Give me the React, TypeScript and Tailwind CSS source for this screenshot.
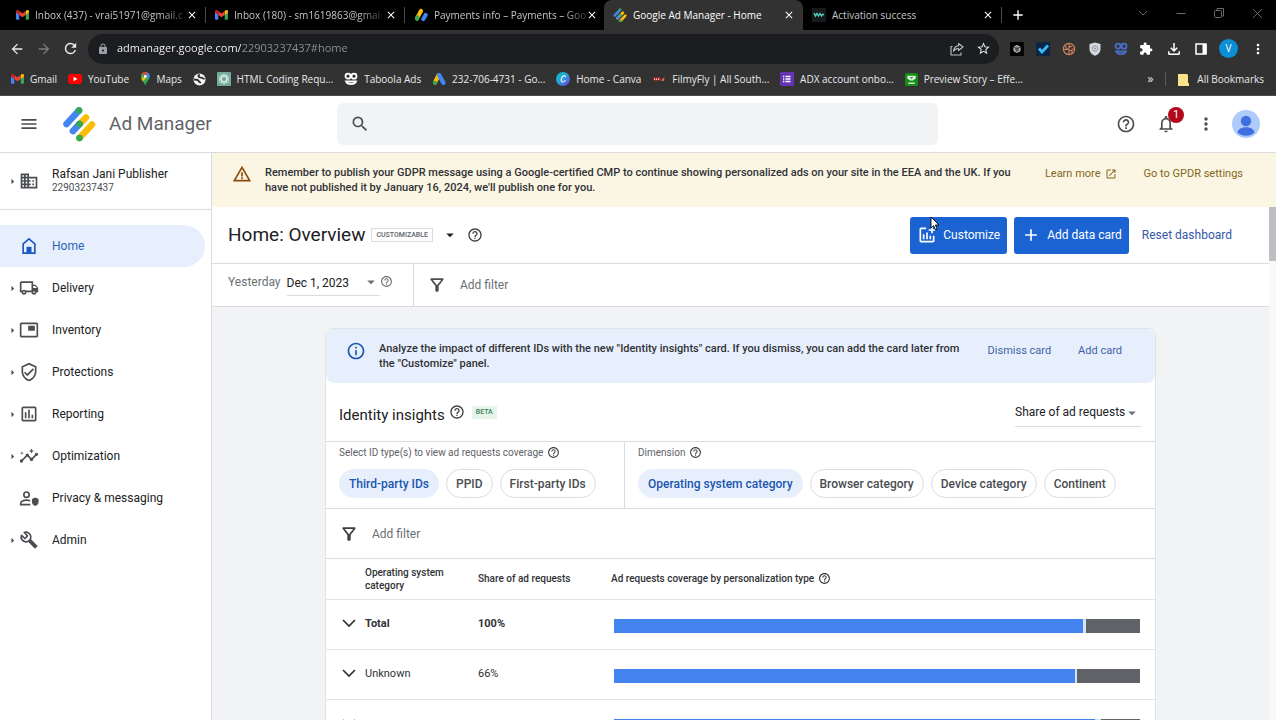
import type { ReactNode } from "react";
import {
  MdAdd,
  MdArrowBack,
  MdArrowDropDown,
  MdArrowForward,
  MdArrowRight,
  MdClose,
  MdDomain,
  MdExtension,
  MdHelpOutline,
  MdInfoOutline,
  MdLock,
  MdMenu,
  MdMoreVert,
  MdNotificationsNone,
  MdOpenInNew,
  MdOutlineAddchart,
  MdOutlineFileDownload,
  MdOutlineFilterAlt,
  MdOutlineInsertChart,
  MdOutlineInsights,
  MdOutlineLocalShipping,
  MdOutlineVerifiedUser,
  MdPictureInPicture,
  MdRefresh,
  MdSearch,
  MdStarBorder,
  MdWarningAmber,
} from "react-icons/md";

function GmailIcon() {
  return (
    <svg viewBox="0 0 24 18" className="w-[13px] shrink-0">
      <path d="M0 3v13a2 2 0 0 0 2 2h4V7z" fill="#4285f4" />
      <path d="M24 3v13a2 2 0 0 1-2 2h-4V7z" fill="#34a853" />
      <path d="M18 2v7l6-4.500V2.500c0-2-2.500-3.200-4.200-2z" fill="#fbbc04" />
      <path d="M6 9V2l6 4.500L18 2v7l-6 4.500z" fill="#ea4335" />
      <path d="M0 2.500v2L6 9V2L4.200.500C2.500-.7 0 .5 0 2.500z" fill="#c5221f" />
    </svg>
  );
}

function AdSenseIcon() {
  return (
    <svg viewBox="0 0 24 24" className="w-[14px] shrink-0" strokeLinecap="round" fill="none">
      <path d="M12 5L5 18" stroke="#fbbc04" strokeWidth="7" />
      <path d="M6 16L5 18" stroke="#34a853" strokeWidth="7" />
      <path d="M20 12l-4 7" stroke="#4285f4" strokeWidth="7" />
    </svg>
  );
}

function AdManagerLogo({ className }: { className: string }) {
  return (
    <svg viewBox="0 0 34 36" className={className} strokeWidth="6.500" strokeLinecap="round" fill="none">
      <path d="M4.500 18L17 4.500" stroke="#4285f4" />
      <path d="M11 25L24 11.500" stroke="#fbbc04" />
      <path d="M11 25L17.500 18" stroke="#4285f4" />
      <path d="M17.500 32L30 18.500" stroke="#fbbc04" />
      <g fill="#34a853" stroke="none">
        <circle cx="17" cy="4.500" r="3.300" />
        <circle cx="17.500" cy="18" r="3.300" />
        <circle cx="17.500" cy="32" r="3.300" />
      </g>
    </svg>
  );
}

function WaveIcon() {
  return (
    <svg viewBox="0 0 14 14" className="w-[14px] shrink-0">
      <rect width="14" height="14" fill="#17191a" />
      <path d="M2 5l1.500 3L5 5.500 6.500 8 8 5.500 9.500 8l1-1.500H12" stroke="#4fd1c5" strokeWidth="1.400" fill="none" />
    </svg>
  );
}

function YouTubeIcon() {
  return (
    <svg viewBox="0 0 14 12" className="w-[14px] shrink-0">
      <rect y="1" width="14" height="10" rx="3" fill="#f00" />
      <path d="M5.500 3.800v4.400L9.500 6z" fill="#fff" />
    </svg>
  );
}

function MapsIcon() {
  return (
    <svg viewBox="0 0 12 16" className="h-[14px] shrink-0">
      <path d="M6 0a5 5 0 0 0-5 5c0 4 4 6 5 11 1-5 5-7 5-11a5 5 0 0 0-5-5z" fill="#34a853" />
      <path d="M6 0a5 5 0 0 0-4 2l4 3 2.500-4.300A5 5 0 0 0 6 0z" fill="#ea4335" />
      <path d="M8.500.700L6 5l4.500 2.200C11.500 5 11 2 8.500.700z" fill="#4285f4" />
      <path d="M1.500 7.500L6 5l1 2-4 3.500z" fill="#fbbc04" />
      <circle cx="6" cy="5" r="1.700" fill="#fff" />
    </svg>
  );
}

function GlobeIcon() {
  return (
    <svg viewBox="0 0 14 14" className="w-[13px] shrink-0">
      <circle cx="7" cy="7" r="6.500" fill="#f1f3f4" />
      <path d="M7.500 2c-2.500 0-2 2.500 0 2.700 2 .1 2.500.8 5 1.800M1 7c3 0 4.500 0 5 1.500s2 1 2 2.500" stroke="#303134" strokeWidth="1.900" fill="none" />
    </svg>
  );
}

function GptIcon() {
  return (
    <svg viewBox="0 0 14 14" className="w-[14px] shrink-0">
      <rect width="14" height="14" rx="1" fill="#74aa9c" />
      <g fill="none" stroke="#e8f3f0" strokeWidth=".8">
        <ellipse cx="7" cy="7" rx="2.500" ry="4.800" />
        <ellipse cx="7" cy="7" rx="2.500" ry="4.800" transform="rotate(60 7 7)" />
        <ellipse cx="7" cy="7" rx="2.500" ry="4.800" transform="rotate(120 7 7)" />
      </g>
    </svg>
  );
}

function TaboolaIcon({ color }: { color: string }) {
  return (
    <svg viewBox="0 0 14 14" className="w-[14px] shrink-0" stroke={color} strokeWidth="1.800" fill="none">
      <circle cx="4" cy="4.200" r="2.500" />
      <circle cx="10" cy="4.200" r="2.500" />
      <path d="M2 9.500c1.500 3.600 8.500 3.600 10 0z" />
    </svg>
  );
}

function GoogleAdsIcon() {
  return (
    <svg viewBox="0 0 24 24" className="w-[14px] shrink-0" strokeLinecap="round">
      <path d="M11 6L5 18" stroke="#fbbc04" strokeWidth="7" />
      <path d="M12.500 5.500L19.500 18.500" stroke="#4285f4" strokeWidth="7.500" />
      <circle cx="5" cy="18.500" r="3.600" fill="#34a853" />
    </svg>
  );
}

function CanvaIcon() {
  return (
    <svg viewBox="0 0 14 14" className="w-[14px] shrink-0">
      <defs>
        <linearGradient id="canva" x1="0" y1="0" x2="1" y2="1">
          <stop offset="0" stopColor="#00c4cc" />
          <stop offset=".5" stopColor="#2a9fd8" />
          <stop offset="1" stopColor="#7d2ae8" />
        </linearGradient>
      </defs>
      <circle cx="7" cy="7" r="7" fill="url(#canva)" />
      <path d="M9.300 5.200c.3-2-2-2-3.200-.2-1.500 2.300-1 5 .7 5 1.200 0 2-.8 2.700-1.800" stroke="#fff" strokeWidth="1.100" fill="none" />
    </svg>
  );
}

function FilmyIcon() {
  return (
    <svg viewBox="0 0 14 14" className="w-[14px] shrink-0">
      <path d="M1 5.500h8v3H2z" fill="#c62828" />
      <path d="M2.500 6.500v1.500M4.500 6.500v1.500M6.500 6.500v1.500" stroke="#f5d6d6" strokeWidth="1" />
      <path d="M9 8.500l3.500-3.500-.5 4z" fill="#e07b39" />
    </svg>
  );
}

function FormsIcon() {
  return (
    <svg viewBox="0 0 14 14" className="w-[14px] shrink-0">
      <rect width="14" height="14" rx="1" fill="#6434b5" />
      <path d="M5.500 4.500h5M5.500 7h5M5.500 9.500h5M3 4.500h1.300M3 7h1.300M3 9.500h1.300" stroke="#fff" strokeWidth="1.300" />
    </svg>
  );
}

function StoryIcon() {
  return (
    <svg viewBox="0 0 14 14" className="w-[13px] shrink-0">
      <rect width="14" height="14" rx="2" fill="#188c18" />
      <path d="M2.500 3h9v3L8.500 8h-3l-3-2z" fill="#d9f2d9" />
      <path d="M5 4.500l2 2 2-2z" fill="#188c18" />
      <path d="M3.500 11h7" stroke="#d9f2d9" strokeWidth="1.500" />
    </svg>
  );
}

function ShareIcon() {
  return (
    <svg viewBox="0 0 14 14" className="w-[14px]" fill="none" stroke="currentColor" strokeWidth="1.100" strokeLinejoin="round">
      <path d="M2.500 4.500H1V13h10v-2.500" />
      <path d="M8.500 1.500L13 5 8.500 8.500v-2c-2.500 0-4 1-5 2.800.3-3 2-5.300 5-5.600z" />
    </svg>
  );
}

function HomeIcon() {
  return (
    <svg viewBox="0 0 24 24" className="size-5 text-[#1a56c4]">
      <path d="M5 20.500V9.500l7-6 7 6v11z" fill="none" stroke="currentColor" strokeWidth="2" />
      <path d="M9 13h6v7H9z" fill="currentColor" />
    </svg>
  );
}

function PrivacyIcon() {
  return (
    <svg viewBox="0 0 24 24" className="size-5">
      <g fill="none" stroke="currentColor" strokeWidth="2">
        <circle cx="9" cy="8" r="3.200" />
        <path d="M13.500 20H2v-1.500c0-2.500 3.500-4 7-4 1.500 0 3 .3 4.300.8" />
      </g>
      <path d="M19.500 11.500l4 1.700v3.300c0 2.500-1.700 4.300-4 5-2.300-.7-4-2.500-4-5v-3.300z" fill="currentColor" />
    </svg>
  );
}

function WrenchIcon() {
  return (
    <svg viewBox="0 0 24 24" className="size-5" fill="none" stroke="currentColor">
      <path d="M6.300 3A5.800 5.800 0 1 1 3 6.300l4 3.900 3.200-3.200z" strokeWidth="2" strokeLinejoin="round" />
      <path d="M12.500 12.500l8.300 8.300" strokeWidth="4.600" />
    </svg>
  );
}

// long titles fade out at the tab's edge
const tabs = [
  { title: "Inbox (437) - vrai51971@gmail.c", icon: <GmailIcon />, fade: true, divider: true },
  { title: "Inbox (180) - sm1619863@gmai", icon: <GmailIcon />, fade: true, divider: true },
  { title: "Payments info – Payments – Goo", icon: <AdSenseIcon />, fade: true },
  { title: "Google Ad Manager - Home", icon: <AdManagerLogo className="w-[14px] shrink-0" />, active: true },
  { title: "Activation success", icon: <WaveIcon />, divider: true },
];

const bookmarks = [
  { label: "Gmail", icon: <GmailIcon /> },
  { label: "YouTube", icon: <YouTubeIcon /> },
  { label: "Maps", icon: <MapsIcon /> },
  { label: "", icon: <GlobeIcon /> },
  { label: "HTML Coding Requ...", icon: <GptIcon /> },
  { label: "Taboola Ads", icon: <TaboolaIcon color="#fff" /> },
  { label: "232-706-4731 - Go...", icon: <GoogleAdsIcon /> },
  { label: "Home - Canva", icon: <CanvaIcon /> },
  { label: "FilmyFly | All South...", icon: <FilmyIcon /> },
  { label: "ADX account onbo...", icon: <FormsIcon /> },
  { label: "Preview Story – Effe...", icon: <StoryIcon /> },
];

const navItems = [
  { label: "Home", icon: <HomeIcon />, active: true },
  { label: "Delivery", icon: <MdOutlineLocalShipping className="size-5" />, expandable: true },
  { label: "Inventory", icon: <MdPictureInPicture className="size-5" />, expandable: true },
  { label: "Protections", icon: <MdOutlineVerifiedUser className="size-5" />, expandable: true },
  { label: "Reporting", icon: <MdOutlineInsertChart className="size-5" />, expandable: true },
  { label: "Optimization", icon: <MdOutlineInsights className="size-5" />, expandable: true },
  { label: "Privacy & messaging", icon: <PrivacyIcon /> },
  { label: "Admin", icon: <WrenchIcon />, expandable: true },
];

const rows = [
  { name: "Total", share: "100%", blue: 89.2, gap: 0.5, bold: true },
  { name: "Unknown", share: "66%", blue: 87.7, gap: 0.3 },
  { name: "", share: "", blue: 91.4, gap: 1.2 },
];

function TabStrip() {
  return (
    <div className="flex h-[30px] items-stretch bg-black pl-[7px] text-[#c4c7c5]">
      {tabs.map((tab) => (
        <div
          key={tab.title}
          className={
            tab.active
              ? "flex max-w-[199px] flex-1 items-center rounded-t-lg bg-[#323232] pr-2 pl-[9px] text-white"
              : "flex max-w-[199px] flex-1 items-center pl-[9px]"
          }
        >
          {tab.icon}
          <span
            className={
              tab.fade
                ? "mr-auto ml-[6px] shrink-0 whitespace-nowrap [mask-image:linear-gradient(90deg,#000_85%,#0004)]"
                : "mr-auto ml-[6px] shrink-0 whitespace-nowrap"
            }
          >
            {tab.title}
          </span>
          <button aria-label="Close tab" className="shrink-0 text-white">
            <MdClose className="size-3" />
          </button>
          {!tab.active && <span className={tab.divider ? "ml-[7px] h-4 w-px bg-[#4a4a4a]" : "ml-[7px] w-px"} />}
        </div>
      ))}
      <button aria-label="New tab" className="ml-2 text-white">
        <MdAdd className="size-4" />
      </button>
      <div className="ml-auto flex items-center gap-[26px] pr-[13px] pb-1 text-[#6b6b6b]">
        <svg viewBox="0 0 12 12" className="size-3" fill="none" stroke="currentColor">
          <path d="M2 4l4 4 4-4" />
        </svg>
        <svg viewBox="0 0 12 12" className="size-3" stroke="currentColor">
          <path d="M1.500 6.500h9" />
        </svg>
        <svg viewBox="0 0 12 12" className="size-3" fill="none" stroke="currentColor">
          <path d="M4 3V1.500h6.500V9H9" />
          <rect x="1.500" y="3.500" width="7" height="7" rx="1" />
        </svg>
        <svg viewBox="0 0 12 12" className="size-3" stroke="currentColor">
          <path d="M2 2l9 9M11 2l-9 9" />
        </svg>
      </div>
    </div>
  );
}

function Toolbar() {
  return (
    <div className="flex h-[37px] items-center pr-3 pl-[9px] text-[#e8eaed]">
      <button aria-label="Back">
        <MdArrowBack className="size-4" />
      </button>
      <button aria-label="Forward" className="ml-[11px] text-[#7d7d7d]">
        <MdArrowForward className="size-4" />
      </button>
      <button aria-label="Reload" className="ml-[10px]">
        <MdRefresh className="size-[17px]" />
      </button>
      <div className="ml-[9px] flex h-[30px] flex-1 items-center rounded-full bg-[#1c1d20] pr-2 pl-[9px]">
        <MdLock className="size-3 text-[#9aa0a6]" />
        <input
          aria-label="Address"
          defaultValue="admanager.google.com/22903237437#home"
          className="ml-2 min-w-0 flex-1 bg-[linear-gradient(90deg,#ffffff_125px,#8f9397_125px)] bg-clip-text text-[11px] text-transparent outline-none"
        />
        <button aria-label="Share" className="text-[#bdc1c6]">
          <ShareIcon />
        </button>
        <button aria-label="Bookmark" className="ml-3">
          <MdStarBorder className="size-[15px]" />
        </button>
      </div>
      <div className="ml-[11px] flex w-[254px] items-center justify-between">
        <svg viewBox="0 0 14 14" className="size-[14px]">
          <rect width="14" height="14" fill="#000" />
          <path d="M7 3.500l3 1.700v3.600l-3 1.700-3-1.700V5.200z" fill="#777" stroke="#ddd" strokeWidth="1" />
          <path d="M4 5.200L7 7l3-1.800M7 7v3.500" stroke="#222" strokeWidth=".7" fill="none" />
        </svg>
        <svg viewBox="0 0 14 14" className="size-[14px]">
          <rect width="14" height="14" rx="1" fill="#0b2545" />
          <path d="M3 6.500l3 3.500 6-6.500" stroke="#38bdf8" strokeWidth="2.800" fill="none" />
        </svg>
        <svg viewBox="0 0 14 14" className="size-[14px]" fill="none" stroke="#d0835f">
          <circle cx="7" cy="7" r="5.600" strokeWidth="1.200" />
          <path d="M7 1.500v4l3-1.500M4 3.500V7h3v5M1.500 7.500H7M7 8.500h3v3M9.500 7h3" strokeWidth="1.100" />
        </svg>
        <svg viewBox="0 0 14 14" className="size-[14px]">
          <path d="M7 .5l5.500 1.500v5c0 3.500-2.500 5.500-5.500 6.700C4 12.500 1.500 10.500 1.500 7V2z" fill="#d5d8dd" />
          <circle cx="7" cy="6.500" r="2.700" fill="none" stroke="#9499a3" />
          <circle cx="7" cy="6.500" r="1" fill="#9499a3" />
        </svg>
        <TaboolaIcon color="#4a6cc9" />
        <MdExtension className="size-[14px] text-white" />
        <MdOutlineFileDownload className="size-[18px] text-white" />
        <svg viewBox="0 0 12 12" className="size-3">
          <rect x="1" y="1" width="10" height="10" fill="none" stroke="#fff" strokeWidth="1.500" />
          <path d="M7.500 1h4v10h-4z" fill="#fff" />
        </svg>
        <span className="flex size-[19px] items-center justify-center rounded-full bg-[#0b8fd6] text-[10px] text-white">V</span>
        <MdMoreVert className="-mr-[2px] size-4 text-white" />
      </div>
    </div>
  );
}

function BookmarksBar() {
  return (
    <div className="flex h-[29px] items-center border-b border-[#4a4a4a] pr-3 pb-1 pl-[11px] text-[#e8eaed]">
      <div className="flex w-full max-w-[1012px] items-center justify-between">
        {bookmarks.map((b) => (
          <a key={b.label} href="#" aria-label={b.label || "Bookmark"} className="flex items-center gap-[6px] whitespace-nowrap">
            {b.icon}
            {b.label}
          </a>
        ))}
      </div>
      <button aria-label="More bookmarks" className="ml-auto text-xs leading-none">»</button>
      <span className="mx-[12px] h-[14px] w-px bg-[#5c5c5c]" />
      <a href="#" className="flex shrink-0 items-center gap-2 whitespace-nowrap">
        <svg viewBox="0 0 11 13" className="w-[11px]">
          <path d="M0 1h9l1 1v8h1v3H0z" fill="#fbe28b" />
        </svg>
        All Bookmarks
      </a>
    </div>
  );
}

function AppHeader() {
  return (
    <header className="flex h-[57px] items-center border-b border-[#dadce0] text-[#4a4d51]">
      <div className="flex w-[337px] shrink-0 items-center pl-[19px]">
        <button aria-label="Main menu">
          <MdMenu className="size-5" />
        </button>
        <AdManagerLogo className="ml-[23px] w-[34px]" />
        <span className="ml-[13px] text-[19px] text-[#5f6368]">Ad Manager</span>
      </div>
      <label className="flex h-[42px] max-w-[601px] flex-1 items-center rounded-md bg-[#f1f3f4] px-[13px]">
        <MdSearch className="size-5" />
        <input aria-label="Search" className="ml-3 min-w-0 flex-1 outline-none" />
      </label>
      <div className="ml-auto flex items-center gap-4 pr-4">
        <div className="flex items-center gap-5">
          <button aria-label="Help">
            <MdHelpOutline className="size-5" />
          </button>
          <button aria-label="Notifications" className="relative">
            <MdNotificationsNone className="size-5" />
            <span className="absolute -top-[7px] left-3 flex size-4 items-center justify-center rounded-full bg-[#b3081b] text-[11px] text-white">
              1
            </span>
          </button>
          <button aria-label="More options">
            <MdMoreVert className="size-5" />
          </button>
        </div>
        <button aria-label="Account">
          <svg viewBox="0 0 28 28" className="size-7">
            <circle cx="14" cy="14" r="14" fill="#aecbfa" />
            <circle cx="14" cy="11" r="5.200" fill="#3f6fe0" />
            <path d="M5.500 22.500c1-7 16-7 17 0a12.500 12.500 0 0 1-17 0z" fill="#3f6fe0" />
          </svg>
        </button>
      </div>
    </header>
  );
}

function Sidebar() {
  return (
    <aside className="w-[212px] shrink-0 border-r border-[#dadce0] text-[#4a4d51]">
      <div className="flex h-[57px] items-center border-b border-[#dadce0] pl-[6px]">
        <MdArrowRight className="size-[13px]" />
        <MdDomain className="size-5" />
        <div className="ml-[13px]">
          <div className="text-[12px] leading-[14px] text-[#202124]">Rafsan Jani Publisher</div>
          <div className="text-[10px] leading-[14px]">22903237437</div>
        </div>
      </div>
      <nav className="mt-[15px]">
        {navItems.map((item) => (
          <a
            key={item.label}
            href="#"
            className={
              item.active
                ? "mr-[6px] flex h-[42px] items-center rounded-r-full bg-[#e8effc] pl-[6px] text-[#2b62b8]"
                : "mr-[6px] flex h-[42px] items-center pl-[6px]"
            }
          >
            <span className="w-[13px]">{item.expandable && <MdArrowRight className="size-[13px]" />}</span>
            {item.icon}
            <span className={item.active ? "ml-[13px] text-[12px]" : "ml-[13px] text-[12px] text-[#202124]"}>{item.label}</span>
          </a>
        ))}
      </nav>
    </aside>
  );
}

function Chip({ children, selected }: { children: ReactNode; selected?: boolean }) {
  return (
    <button
      aria-pressed={!!selected}
      className={
        selected
          ? "h-[29px] rounded-full border border-[#e8effc] bg-[#e8effc] px-[9px] font-medium whitespace-nowrap text-[#1a56b0]"
          : "h-[29px] rounded-full border border-[#dadce0] px-[9px] font-medium whitespace-nowrap text-[#4a4d51]"
      }
    >
      {children}
    </button>
  );
}

function IdentityCard() {
  return (
    <section className="mx-auto w-full max-w-[831px] rounded-t-lg border border-[#dfe3ea] bg-white">
      <div className="flex min-h-[54px] items-start rounded-lg bg-[#e8effc] pt-[12px] pl-[20px]">
        <MdInfoOutline className="size-5 shrink-0 text-[#1a56b0]" />
        <p className="ml-[13px] max-w-[590px] text-[11px] leading-[15px] font-medium text-[#303236]">
          Analyze the impact of different IDs with the new "Identity insights" card. If you dismiss, you can add the card later from the
          "Customize" panel.
        </p>
        <div className="ml-auto flex gap-[27px] pt-[2px] pr-[33px] text-[11px] leading-4 whitespace-nowrap text-[#3c63a8]">
          <button>Dismiss card</button>
          <button>Add card</button>
        </div>
      </div>

      <div className="flex h-[59px] items-center border-b border-[#dadce0] pr-[14px] pl-[13px]">
        <h2 className="pt-[6px] text-[15px] text-[#202124]">Identity insights</h2>
        <MdHelpOutline className="ml-1 size-4" />
        <span className="ml-[7px] bg-[#e6f4ea] px-1 text-[7px] leading-[13px] font-medium text-[#3b8256]">BETA</span>
        <div className="relative ml-auto w-[126px] border-b border-[#dadce0]">
          <select aria-label="Metric" className="h-7 w-full appearance-none text-[12px] text-[#202124] outline-none">
            <option>Share of ad requests</option>
          </select>
          <MdArrowDropDown className="pointer-events-none absolute top-[6px] right-0 size-[18px] text-[#6b6f74]" />
        </div>
      </div>

      <div className="flex border-b border-[#dadce0] text-[12px]">
        <div className="w-[299px] border-r border-[#dadce0] pb-[10px] pl-[13px]">
          <div className="flex h-[21px] items-center gap-1 text-[10px] text-[#5f6368]">
            Select ID type(s) to view ad requests coverage
            <MdHelpOutline className="size-[13px] text-[#3c4043]" />
          </div>
          <div className="mt-[6px] flex gap-[7px]">
            <Chip selected>Third-party IDs</Chip>
            <Chip>PPID</Chip>
            <Chip>First-party IDs</Chip>
          </div>
        </div>
        <div className="flex-1 pl-[13px]">
          <div className="flex h-[21px] items-center gap-1 text-[10px] text-[#5f6368]">
            Dimension
            <MdHelpOutline className="size-[13px] text-[#3c4043]" />
          </div>
          <div className="mt-[6px] flex gap-[7px]">
            <Chip selected>Operating system category</Chip>
            <Chip>Browser category</Chip>
            <Chip>Device category</Chip>
            <Chip>Continent</Chip>
          </div>
        </div>
      </div>

      <div className="flex h-[50px] items-center border-b border-[#dadce0] pl-[13px]">
        <MdOutlineFilterAlt className="size-5" />
        <button className="ml-[13px] text-[12px] text-[#6b6f74]">Add filter</button>
      </div>

      <table className="w-full table-fixed text-left text-[11px] text-[#303236]">
        <colgroup>
          <col className="w-[39px]" />
          <col className="w-[113px]" />
          <col className="w-[133px]" />
          <col />
        </colgroup>
        <thead>
          <tr className="h-[40px] border-b border-[#e3e5e8]">
            <th aria-label="Expand" />
            <th className="pr-4 text-[10px] leading-[13px] font-medium">Operating system category</th>
            <th className="text-[10px] font-medium">Share of ad requests</th>
            <th className="text-[10px] font-medium">
              <span className="flex items-center gap-1">
                Ad requests coverage by personalization type
                <MdHelpOutline className="size-[13px]" />
              </span>
            </th>
          </tr>
        </thead>
        <tbody>
          {rows.map((row) => (
            <tr key={row.name} className={row.bold ? "h-[50px] border-b border-[#e3e5e8] font-bold" : "h-[50px] border-b border-[#e3e5e8]"}>
              <td className="pl-4">
                <button aria-label="Expand row" className="block">
                  <svg viewBox="0 0 14 14" className="size-[14px]" fill="none" stroke="currentColor" strokeWidth="1.700">
                    <path d="M1 3l6 6 6-6" />
                  </svg>
                </button>
              </td>
              <td>{row.name}</td>
              <td>{row.share}</td>
              <td className="pt-[3px] pr-[15px] pl-[3px]">
                <div className="flex h-[14px] bg-[#5f6368]">
                  <div className="bg-[#4383ee]" style={{ width: `${row.blue}%` }} />
                  <div className="bg-[#d2e3fc]" style={{ width: `${row.gap}%` }} />
                </div>
              </td>
            </tr>
          ))}
        </tbody>
      </table>
    </section>
  );
}

export default function App() {
  return (
    <div className="relative flex h-screen flex-col overflow-hidden bg-white font-['Roboto',sans-serif] text-[#3c4043]">
      <div className="shrink-0 bg-[#323232] font-['Open_Sans',sans-serif] text-[10px]">
        <TabStrip />
        <Toolbar />
        <BookmarksBar />
      </div>
      <AppHeader />
      <div className="flex min-h-0 flex-1">
        <Sidebar />
        <main className="flex min-w-0 flex-1 flex-col">
          <div className="flex h-[54px] shrink-0 items-start bg-[#fbf6e3] pt-[11px] pr-[33px] pl-5">
            <MdWarningAmber className="size-5 shrink-0 text-[#8a4b0c]" />
            <p className="ml-[13px] max-w-[760px] pt-px text-[11px] leading-[15px] font-medium text-[#303236]">
              Remember to publish your GDPR message using a Google-certified CMP to continue showing personalized ads on your site in the
              EEA and the UK. If you have not published it by January 16, 2024, we'll publish one for you.
            </p>
            <div className="ml-auto flex gap-[27px] pt-[2px] text-[11px] leading-4 whitespace-nowrap text-[#826620]">
              <a href="#" className="flex items-center gap-1">
                Learn more
                <MdOpenInNew className="size-3" />
              </a>
              <a href="#">Go to GPDR settings</a>
            </div>
          </div>

          <div className="flex min-h-0 flex-1">
            <div className="flex min-w-0 flex-1 flex-col">
              <div className="flex h-[57px] shrink-0 items-center border-b border-[#dadce0] pr-[37px] pl-4">
                <h1 className="text-[19px] text-[#202124]">Home: Overview</h1>
                <span className="ml-[6px] border border-[#dadce0] px-1 text-[7px] leading-3 font-medium text-[#5f6368]">CUSTOMIZABLE</span>
                <button aria-label="Switch view" className="ml-2 text-[#202124]">
                  <MdArrowDropDown className="size-[18px]" />
                </button>
                <MdHelpOutline className="ml-2 size-4" />
                <div className="ml-auto flex items-center text-[12px] whitespace-nowrap text-white">
                  <button className="flex h-[37px] items-center gap-[6px] rounded-[3px] bg-[#1b63d2] px-[7px]">
                    <MdOutlineAddchart className="size-5" />
                    Customize
                  </button>
                  <button className="ml-[7px] flex h-[37px] items-center gap-[6px] rounded-[3px] bg-[#1b63d2] px-[7px]">
                    <MdAdd className="size-5" />
                    Add data card
                  </button>
                  <button className="ml-[13px] text-[#3558a8]">Reset dashboard</button>
                </div>
              </div>

              <div className="flex h-[43px] shrink-0 border-b border-[#dadce0] text-[12px] text-[#6b6f74]">
                <div className="flex w-[202px] items-start border-r border-[#dadce0] pt-[6px] pl-4">
                  <label htmlFor="range" className="leading-6">Yesterday</label>
                  <div className="relative ml-[6px] w-[93px] border-b border-[#dadce0]">
                    <select id="range" className="h-[25px] w-full appearance-none text-[12px] text-[#202124] outline-none">
                      <option>Dec 1, 2023</option>
                    </select>
                    <MdArrowDropDown className="pointer-events-none absolute top-[3px] right-0 size-[18px]" />
                  </div>
                  <MdHelpOutline className="mt-[5px] size-[13px]" />
                </div>
                <MdOutlineFilterAlt className="mt-[11px] ml-[13px] size-5 text-[#4a4d51]" />
                <button className="ml-[13px]">Add filter</button>
              </div>

              <div className="min-h-0 flex-1 overflow-hidden bg-[#f1f3f4] px-6 pt-[21px]">
                <IdentityCard />
              </div>
            </div>
            <div className="w-[7px] bg-[#f8f9fa]">
              <div className="h-[54px] bg-[#bcbec1]" />
            </div>
          </div>
        </main>
      </div>

      {/* mouse pointer */}
      <svg viewBox="0 0 10 15" className="absolute top-[216px] left-[930px] w-[10px]">
        <path d="M1 1v11l2.600-2.300L5.500 14l1.700-.8L5.400 9H9z" fill="#fff" stroke="#000" strokeWidth=".9" />
      </svg>
    </div>
  );
}
